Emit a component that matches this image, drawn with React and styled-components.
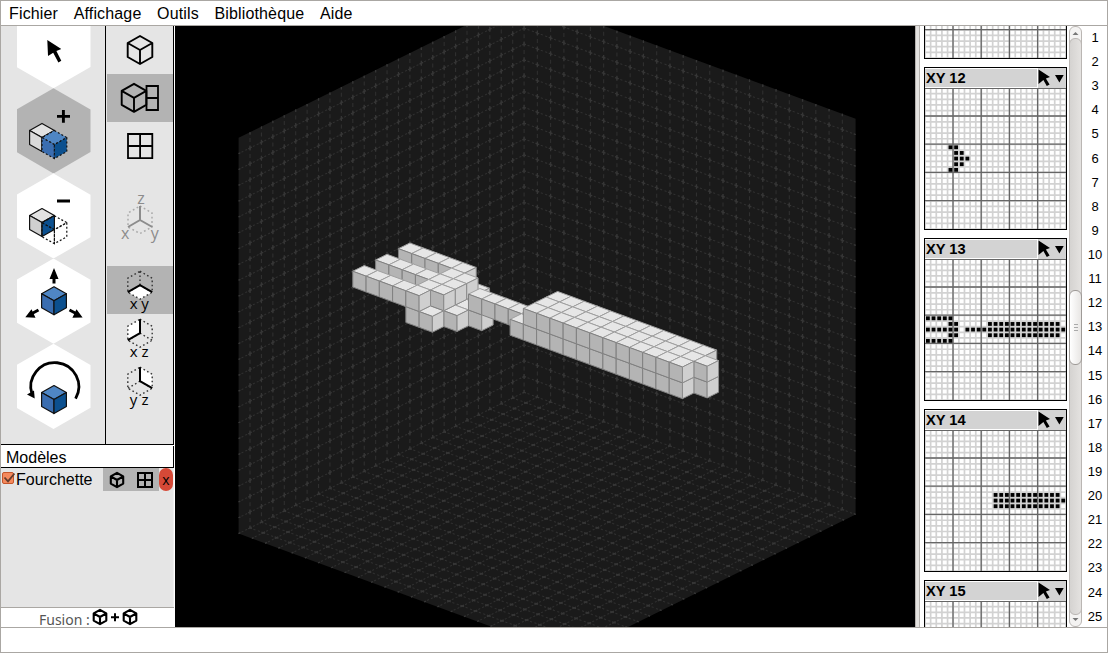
import React from "react";
import styled, { createGlobalStyle } from "styled-components";

const GlobalStyle = createGlobalStyle`
  * { box-sizing: border-box; }
  body { margin: 0; background: #fff; font-family: "Liberation Sans", Arial, sans-serif; color: #000; }
  svg { display: block; }
`;

const Window = styled.div`
  width: 1108px; height: 653px; display: flex; flex-direction: column;
  border: 1px solid #aaa7a3; background: #fff; overflow: hidden;
`;
const MenuBar = styled.nav`
  height: 25px; flex: none; display: flex; align-items: flex-start; gap: 15.6px;
  padding: 1px 8px 0; border-bottom: 1px solid #aaa7a3; font-size: 16px; letter-spacing: 0.15px;
`;
const MenuItem = styled.span`height: 23px; line-height: 23px; white-space: nowrap;`;
const Body = styled.div`height: 601px; flex: none; display: flex; overflow: hidden;`;
const StatusBar = styled.footer`flex: 1; border-top: 1px solid #aaa7a3; background: #fff;`;

const Sidebar = styled.aside`
  width: 174px; flex: none; display: flex; flex-direction: column;
  background: #fff; padding-right: 1px;
`;
const Toolbars = styled.div`
  height: 419px; flex: none; display: flex; background: #e5e5e5; overflow: hidden;
  border-bottom: 1px solid #000; border-right: 1px solid #000;
`;
const ToolColumn = styled.div`
  width: 105px; flex: none; display: flex; flex-direction: column; align-items: center;
  border-right: 1px solid #000; overflow: hidden; padding-left: 1px;
`;
const ToolStack = styled.div`margin-top: -23px; display: flex; flex-direction: column;`;
const HexButton = styled.div`
  width: 74px; height: 85.2px; flex: none;
  background: ${(p) => (p.$active ? "#b3b3b3" : "#fff")};
  clip-path: polygon(50% 0, 100% 25%, 100% 75%, 50% 100%, 0 75%, 0 25%);
`;
const ViewColumn = styled.div`
  flex: 1; padding-left: 1px; display: flex; flex-direction: column;
`;
const ViewButton = styled.div`
  height: 48px; flex: none; margin-bottom: ${(p) => p.$after || 0}px;
  background: ${(p) => (p.$active ? "#b3b3b3" : "transparent")};
`;
const IconCanvas = styled.svg`overflow: visible;`;
const GlyphText = styled.text`
  font-family: "Open Sans", "Noto Sans", sans-serif;
  font-size: ${(p) => p.$size || 15}px; text-anchor: middle;
`;
const ModelsTitle = styled.div`
  height: 22px; flex: none; margin-top: 1px; padding-left: 5px; font-size: 16px; line-height: 23px;
  border-bottom: 1px solid #000; border-right: 1px solid #000; background: #fff;
`;
const ModelList = styled.div`flex: 1; background: #e5e5e5; border-right: 1px solid #eee;`;
const ModelRow = styled.div`height: 23px; display: flex; align-items: center; padding-left: 1px;`;
const ModelName = styled.span`width: 87px; flex: none; font-size: 16px; line-height: 23px; margin-left: 1px;`;
const ModelViews = styled.div`width: 56px; height: 23px; flex: none; background: #b3b3b3;`;
const RemoveButton = styled.div`
  width: 14px; height: 23px; flex: none; background: #d64937; border-radius: 7px;
  text-align: center; font: 14px/24px "Open Sans", sans-serif;
`;
const FusionBar = styled.div`
  height: 20px; flex: none; border-top: 1px solid #aaa7a3; background: #fff;
  display: flex; align-items: flex-start; padding-left: 38px; gap: 2px; color: #555;
`;
const FusionLabel = styled.span`
  width: 51px; height: 19px; white-space: nowrap; font: 14px/23px "Noto Sans", sans-serif;
`;

const Viewport = styled.main`width: 740px; flex: none; background: #000; overflow: hidden;`;
const Splitter = styled.div`
  width: 5px; flex: none; background: #e4e2e0;
  border-left: 1px solid #b5b1ae; border-right: 1px solid #b5b1ae;
`;
const SlicePanel = styled.section`width: 149px; flex: none; padding-left: 4px; overflow: hidden;`;
const SliceStack = styled.div`margin-top: -130px; display: flex; flex-direction: column; gap: 8px;`;
const SliceCard = styled.article`width: 143px; height: 163px; flex: none; border: 1px solid #000;`;
const SliceHeader = styled.header`height: 20px; display: flex; background: #d3d3d3;`;
const SliceTitle = styled.h2`
  margin: 0; width: 113px; border: 1px solid #fff; border-left: none;
  font-size: 14.67px; line-height: 18px; font-weight: bold; padding-left: 1px;
`;

const ScrollTrack = styled.div`width: 13px; flex: none; display: flex; flex-direction: column;`;
const ScrollCap = styled.div`
  height: 24px; flex: none; background: #f4f3f2; border: 1px solid #bab6b3;
  border-radius: 6px; display: flex; justify-content: center;
  align-items: ${(p) => (p.$down ? "flex-end" : "flex-start")};
  margin-${(p) => (p.$down ? "top" : "bottom")}: -12px;
`;
const ScrollTrough = styled.div`
  flex: 1; border: 1px solid #bab6b3; border-radius: 6px; z-index: 1; padding-top: 251px;
  background: linear-gradient(90deg, #d5d3d1, #e4e2e0);
`;
const ScrollThumb = styled.div`
  height: 75px; margin: 0 -1px; border: 1px solid #9e9a97; border-radius: 6px;
  background: linear-gradient(90deg, #fff, #e8e6e4);
  display: flex; flex-direction: column; justify-content: center; align-items: center; gap: 2px;
`;
const Grip = styled.i`width: 4px; height: 1px; background: #aaa;`;
const Ruler = styled.div`flex: 1; display: flex; flex-direction: column; padding-left: 1px;`;
const RulerNumber = styled.span`
  height: 24.12px; flex: none; font-size: 13px; line-height: 24px; text-align: center;
`;

const INK = "#000";

function cubePoints(cx, cy, w, h) {
  return {
    t: [cx, cy - h], tr: [cx + w, cy - h / 2], br: [cx + w, cy + h / 2],
    b: [cx, cy + h], bl: [cx - w, cy + h / 2], tl: [cx - w, cy - h / 2], c: [cx, cy],
  };
}
const line = (...pts) => "M" + pts.map((p) => p.join(" ")).join("L");

function WireCube({ cx, cy, w = 12.3, h = 14, width = 1.9 }) {
  const p = cubePoints(cx, cy, w, h);
  return (
    <path
      d={line(p.t, p.tr, p.br, p.b, p.bl, p.tl) + "Z" + line(p.tl, p.c, p.tr) + line(p.c, p.b)}
      fill="none" stroke={INK} strokeWidth={width} strokeLinejoin="round"
    />
  );
}

function SolidCube({ cx, cy, top, left, right, dotted, stroke = "#111" }) {
  const p = cubePoints(cx, cy, 12.4, 14);
  const common = { stroke, strokeWidth: 1.2, strokeDasharray: dotted ? "2 2" : undefined, strokeLinejoin: "round" };
  return (
    <g {...common}>
      <path d={line(p.t, p.tr, p.c, p.tl) + "Z"} fill={top} />
      <path d={line(p.tl, p.c, p.b, p.bl) + "Z"} fill={left} />
      <path d={line(p.tr, p.br, p.b, p.c) + "Z"} fill={right} />
    </g>
  );
}

const BLUE = { top: "#4f86c4", left: "#3a6db0", right: "#0c508f" };

const ToolIcon = ({ top, children }) => (
  <IconCanvas width="74" height="85" viewBox={`17 ${top} 74 85`}>{children}</IconCanvas>
);
const ViewIcon = ({ top, children }) => (
  <IconCanvas width="66" height="48" viewBox={`107 ${top} 66 48`}>{children}</IconCanvas>
);

function PlaneIcon({ top, plane }) {
  const p = cubePoints(140, top + 19.2, 12.2, 14);
  const faces = { xy: [p.bl, p.c, p.br, p.b], xz: [p.t, p.c, p.bl, p.tl], yz: [p.t, p.tr, p.br, p.c] };
  const bold = { xy: [p.bl, p.c, p.br], xz: [p.t, p.c, p.bl], yz: [p.t, p.c, p.br] };
  return (
    <ViewIcon top={top}>
      <path d={line(...faces[plane]) + "Z"} fill="#fff" />
      <path
        d={line(p.t, p.tr, p.br, p.b, p.bl, p.tl) + "Z" + line(p.c, p.t) + line(p.c, p.bl) + line(p.c, p.br)}
        fill="none" stroke="#333" strokeWidth="1.4" strokeDasharray="1.6 2.5"
      />
      <path d={line(...bold[plane])} fill="none" stroke={INK} strokeWidth="2" />
      <GlyphText x="133.6" y={top + 43.3}>{plane[0]}</GlyphText>
      <GlyphText x="145" y={top + 43.3}>{plane[1]}</GlyphText>
    </ViewIcon>
  );
}

/* Voxel model of the fork: rows of [layer, row, firstColumn, lastColumn]. */
const RUNS = [
  [12, 10, 4, 5], [12, 11, 5, 6], [12, 12, 5, 7], [12, 13, 5, 6], [12, 14, 4, 5],
  [13, 10, 0, 4], [13, 11, 4, 5], [13, 11, 11, 23], [13, 12, 0, 5], [13, 12, 7, 24],
  [13, 13, 4, 5], [13, 13, 11, 23], [13, 14, 0, 4],
  [14, 11, 12, 23], [14, 12, 12, 24], [14, 13, 12, 23],
];
const VOXELS = RUNS.flatMap(([layer, row, a, b]) =>
  Array.from({ length: b - a + 1 }, (_, i) => ({ x: a + i, y: row, z: layer - 1 }))
);
const FILLED = new Set(VOXELS.map((v) => `${v.x},${v.y},${v.z}`));
const has = (x, y, z) => FILLED.has(`${x},${y},${z}`);

const project = (x, y, z) => [
  +(524.1 + 13.26 * x - 11.42 * y).toFixed(2),
  +(392.3 + 4.885 * x + 5.65 * y - 15.83 * z).toFixed(2),
];
const face = (...pts) => line(...pts.map((p) => project(...p))) + "Z";

function buildFaces() {
  const out = [];
  const sorted = [...VOXELS].sort((a, b) => a.x + a.y + a.z - (b.x + b.y + b.z));
  sorted.forEach(({ x, y, z }) => {
    if (!has(x, y, z + 1))
      out.push({ d: face([x, y, z + 1], [x + 1, y, z + 1], [x + 1, y + 1, z + 1], [x, y + 1, z + 1]), fill: "#e6e6e6", stroke: "#a0a0a0" });
    if (!has(x, y + 1, z))
      out.push({ d: face([x, y + 1, z], [x + 1, y + 1, z], [x + 1, y + 1, z + 1], [x, y + 1, z + 1]), fill: "#b4b4b4", stroke: "#808080" });
    if (!has(x + 1, y, z))
      out.push({ d: face([x + 1, y, z], [x + 1, y + 1, z], [x + 1, y + 1, z + 1], [x + 1, y, z + 1]), fill: "#cfcfcf", stroke: "#8c8c8c" });
  });
  return out;
}
const FACES = buildFaces();

const steps = Array.from({ length: 26 }, (_, i) => i);
const inner = steps.slice(0, 25);
const segment = (a, b) => line(project(...a), project(...b));
const Z_LINES = inner.map((i) => segment([i, 0, 0], [i, 0, 25]) + segment([0, i, 0], [0, i, 25])).join("");
const X_LINES = inner.map((i) => segment([0, i, 0], [25, i, 0]) + segment([0, 0, i], [25, 0, i])).join("");
const Y_LINES = inner.map((i) => segment([i, 0, 0], [i, 25, 0]) + segment([0, 0, i], [0, 25, i])).join("");
const HULL = face([0, 0, 25], [25, 0, 25], [25, 0, 0], [25, 25, 0], [0, 25, 0], [0, 25, 25]);

const Scene = () => (
  <svg width="740" height="601" viewBox="175 26 740 601">
    <path d={HULL} fill="#1a1a1a" />
    <g fill="none" stroke="#2f2f2f" strokeWidth="1.1">
      <path d={Z_LINES} strokeDasharray="4 3.915" strokeDashoffset="2" />
      <path d={X_LINES} strokeDasharray="2.2 2.51" strokeDashoffset="1.1" />
      <path d={Y_LINES} strokeDasharray="2.1 2.147" strokeDashoffset="1.05" />
    </g>
    <g fill="none" stroke="#363636" strokeWidth="1.3">
      <path d={Z_LINES} strokeDasharray="5 10.83" strokeDashoffset="2.5" />
      <path d={X_LINES} strokeDasharray="4 10.131" strokeDashoffset="2" />
      <path d={Y_LINES} strokeDasharray="4 8.741" strokeDashoffset="2" />
    </g>
    <g strokeWidth="1" strokeLinejoin="round">
      {FACES.map((f, i) => <path key={i} d={f.d} fill={f.fill} stroke={f.stroke} />)}
    </g>
  </svg>
);

const CELL = 5.64;
const minor = steps.map((i) => `M${i * CELL} 0V141M0 ${i * CELL}H141`).join("");
const majorAt = [1, 2, 3, 4].map((i) => i * 5 * CELL);

function Slice({ layer }) {
  const dots = VOXELS.filter((v) => v.z === layer - 1);
  return (
    <SliceCard>
      <SliceHeader>
        <SliceTitle>XY {layer}</SliceTitle>
        <svg width="28" height="20" viewBox="0 0 28 20">
          <path d="M0.5 1.5L12 9L7.9 10.4L11.6 16.6L8.8 18.1L5.4 12L0.5 16Z" />
          <path d="M17 7H25.7L21.4 14.6Z" />
        </svg>
      </SliceHeader>
      <svg width="141" height="141" viewBox="0 0 141 141">
        <path d={minor} stroke="#d2d2d2" strokeWidth="1.7" />
        {dots.map((v) => (
          <rect key={`${v.x}-${v.y}`} x={v.x * CELL + 0.1} y={v.y * CELL + 0.1} width={CELL} height={CELL} fill="#d2d2d2" />
        ))}
        {majorAt.map((m) => (
          <path key={m} d={`M${m - 0.2} 0V141M0 ${m - 0.2}H141`} stroke="#666" strokeWidth="1.3" />
        ))}
        <path d="M0 .5H141" stroke="#666" />
        {dots.map((v) => (
          <rect key={`${v.x}-${v.y}`} x={v.x * CELL + 1} y={v.y * CELL + 1} width="3.8" height="3.8" />
        ))}
      </svg>
    </SliceCard>
  );
}

const Toolbox = () => (
  <Toolbars>
    <ToolColumn>
      <ToolStack>
        <HexButton>
          <ToolIcon top={3}><path d="M47.3 40L61.3 49L56.4 51L61.3 60.8L58.4 62.6L53.2 52.8L48 56Z" /></ToolIcon>
        </HexButton>
        <HexButton $active>
          <ToolIcon top={88}>
            <path d="M57 116.4H70M63.4 110V122.8" stroke={INK} strokeWidth="2.9" />
            <SolidCube cx={42} cy={137.4} top="#e2e2e2" left="#d9d9d9" right="#eee" />
            <SolidCube cx={54.4} cy={144.6} {...BLUE} dotted />
          </ToolIcon>
        </HexButton>
        <HexButton>
          <ToolIcon top={173.3}>
            <path d="M57 201.4H70" stroke={INK} strokeWidth="3" />
            <SolidCube cx={42} cy={222.8} top="#e2e2e2" left="#cfcfcf" right={BLUE.right} />
            <SolidCube cx={54.4} cy={230} top="none" left="none" right="none" dotted />
          </ToolIcon>
        </HexButton>
        <HexButton>
          <ToolIcon top={258.5}>
            <SolidCube cx={54} cy={300.2} {...BLUE} />
            <path d="M54 283V276M38.5 309.5L31 313.5M69.5 309.5L77 313.5" stroke={INK} strokeWidth="3" />
            <path d="M54 267.5L58.5 278.5H49.5ZM25.3 316.8L31.5 308.8L35.5 317.2ZM82.6 317L76.5 308.8L72.4 317.2Z" />
          </ToolIcon>
        </HexButton>
        <HexButton>
          <ToolIcon top={343.9}>
            <path d="M32 394A24 24 0 1 1 75.6 398.5" fill="none" stroke={INK} strokeWidth="2.8" />
            <path d="M27 394.5L34 390.5L34.7 398.5Z" />
            <SolidCube cx={54} cy={399.5} {...BLUE} />
          </ToolIcon>
        </HexButton>
      </ToolStack>
    </ToolColumn>
    <ViewColumn>
      <ViewButton><ViewIcon top={26}><WireCube cx={140} cy={50} /></ViewIcon></ViewButton>
      <ViewButton $active>
        <ViewIcon top={74}>
          <WireCube cx={134} cy={97.8} />
          <path d="M146.5 86H158V110H146.5ZM146.5 98H158" fill="none" stroke={INK} strokeWidth="1.8" />
        </ViewIcon>
      </ViewButton>
      <ViewButton $after={24}>
        <ViewIcon top={122}>
          <path d="M128 134H152.3V158.2H128ZM140.1 134V158M128 146H152" fill="none" stroke={INK} strokeWidth="1.8" />
        </ViewIcon>
      </ViewButton>
      <ViewButton $after={24}>
        <ViewIcon top={194}>
          <g fill="#8c8c8c">
            <path d="M140 206L152 213V227L140 233.5L128 227V213Z" fill="none" stroke="#aaa" strokeWidth="1.5" strokeDasharray="1.8 2.6" />
            <path d="M140 206V220L128 227M140 220L152.3 227" fill="none" stroke="#8c8c8c" strokeWidth="2" />
            <GlyphText $size={16} x="141" y="203.6">z</GlyphText>
            <GlyphText $size={16} x="125.3" y="238.5">x</GlyphText>
            <GlyphText $size={16} x="154.8" y="238.5">y</GlyphText>
          </g>
        </ViewIcon>
      </ViewButton>
      <ViewButton $active><PlaneIcon top={266} plane="xy" /></ViewButton>
      <ViewButton><PlaneIcon top={314} plane="xz" /></ViewButton>
      <ViewButton><PlaneIcon top={362} plane="yz" /></ViewButton>
    </ViewColumn>
  </Toolbars>
);

export default function App() {
  return (
    <>
      <GlobalStyle />
      <Window>
        <MenuBar>
          {["Fichier", "Affichage", "Outils", "Bibliothèque", "Aide"].map((m) => <MenuItem key={m}>{m}</MenuItem>)}
        </MenuBar>
        <Body>
          <Sidebar>
            <Toolbox />
            <ModelsTitle>Modèles</ModelsTitle>
            <ModelList>
              <ModelRow>
                <svg width="13" height="20" viewBox="2 470 13 20">
                  <rect x="2.5" y="472.5" width="11" height="11" rx="1.5" fill="#f5895c" stroke="#c4562c" />
                  <path d="M4.5 477.5L8 481.3L14.5 473.5" fill="none" stroke="#633c2c" strokeWidth="1.8" />
                </svg>
                <ModelName>Fourchette</ModelName>
                <ModelViews>
                  <svg width="56" height="23" viewBox="103 468 56 23">
                    <WireCube cx={117} cy={480} w={6.2} h={7.2} width={2.1} />
                    <path d="M138 473H152V487H138ZM145 473V487M138 480H152" fill="none" stroke={INK} strokeWidth="2" />
                  </svg>
                </ModelViews>
                <RemoveButton>x</RemoveButton>
              </ModelRow>
            </ModelList>
            <FusionBar>
              <FusionLabel>Fusion :</FusionLabel>
              <svg width="48" height="18" viewBox="92 608 48 18">
                <WireCube cx={100} cy={617} w={6.3} h={7.2} width={2.1} />
                <path d="M111 617.2H119M115 613.2V621.2" stroke={INK} strokeWidth="2" />
                <WireCube cx={130} cy={617} w={6.3} h={7.2} width={2.1} />
              </svg>
            </FusionBar>
          </Sidebar>
          <Viewport><Scene /></Viewport>
          <Splitter />
          <SlicePanel>
            <SliceStack>
              {[11, 12, 13, 14, 15].map((n) => <Slice key={n} layer={n} />)}
            </SliceStack>
          </SlicePanel>
          <ScrollTrack>
            <ScrollCap><svg width="7" height="12" viewBox="0 0 7 12"><path d="M0.5 8L3.5 5L6.5 8Z" fill="#777" /></svg></ScrollCap>
            <ScrollTrough>
              <ScrollThumb><Grip /><Grip /><Grip /></ScrollThumb>
            </ScrollTrough>
            <ScrollCap $down><svg width="7" height="12" viewBox="0 0 7 12"><path d="M0.5 4L3.5 7L6.5 4Z" fill="#777" /></svg></ScrollCap>
          </ScrollTrack>
          <Ruler>
            {Array.from({ length: 25 }, (_, i) => <RulerNumber key={i}>{i + 1}</RulerNumber>)}
          </Ruler>
        </Body>
        <StatusBar />
      </Window>
    </>
  );
}
